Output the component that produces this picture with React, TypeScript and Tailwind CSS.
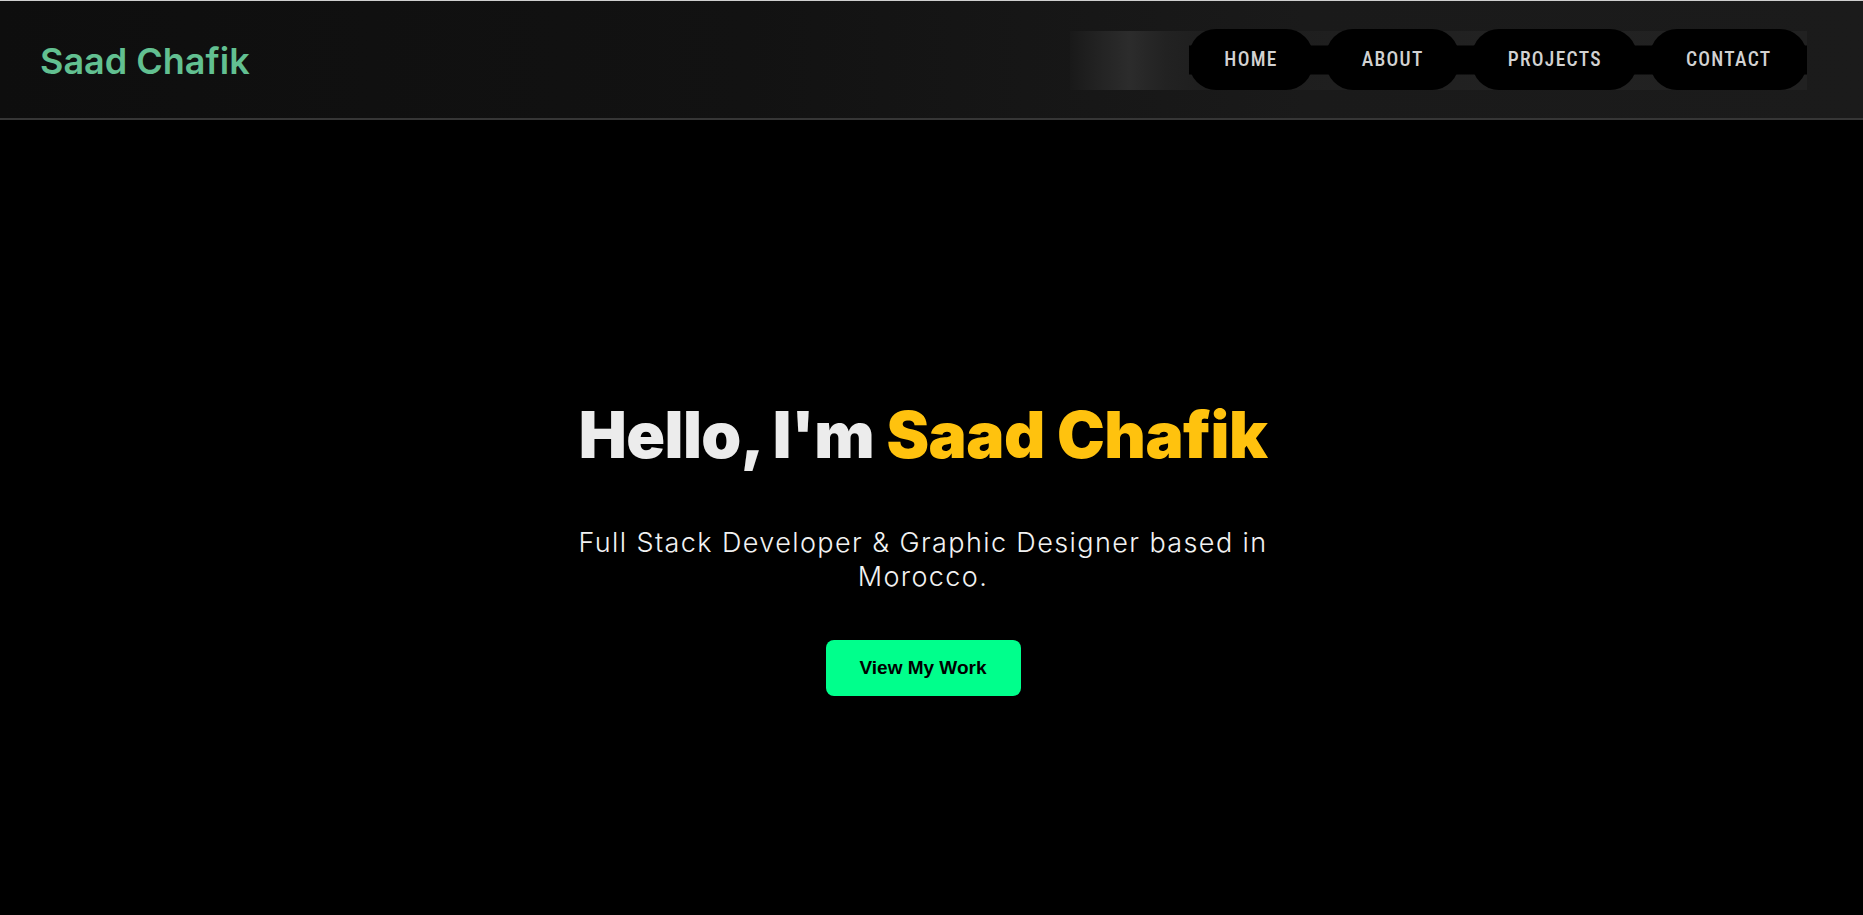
import React from "react";

const navItems = ["HOME", "ABOUT", "PROJECTS", "CONTACT"];

export default function App() {
  return (
    <div className="min-h-screen w-full bg-black">
      <header className="relative flex h-[120px] items-center justify-between border-t border-b-2 border-t-[#cfcfcf] border-b-[#363636] bg-[linear-gradient(90deg,#0e0e0e_0%,#121212_40%,#1a1a1a_70%,#1b1b1b_100%)] pl-[40px] pr-[56px]">
        <div className="pt-[3px] font-['Inter',sans-serif] text-[36px] font-semibold tracking-[0px] text-[#62c091]">
          Saad Chafik
        </div>
        <div className="absolute left-[1070px] top-[30px] h-[59px] w-[737px] bg-[linear-gradient(90deg,#191919_0%,#232323_4%,#2c2c2c_8%,#222222_13%,#1d1d1d_20%,#222222_60%,#212121_100%)]" />
        <nav className="relative flex items-center gap-[13px]">
          <div className="absolute left-0 right-0 top-1/2 h-[29px] -translate-y-1/2 bg-black" />
          {navItems.map((item) => (
            <a
              key={item}
              className="relative flex h-[61px] items-center rounded-[27px] bg-black px-[35.5px] font-['Liberation_Sans_Narrow','Roboto_Condensed','DejaVu_Sans_Condensed',Roboto,sans-serif] text-[19.5px] font-medium tracking-[1.3px] text-[#d2d2d2]"
            >
              {item}
            </a>
          ))}
        </nav>
      </header>
      <main className="flex flex-col items-center pr-[17px] pt-[280px]">
        <h1 className="font-['Inter',sans-serif] text-[64px] font-black leading-[70px] tracking-[-0.5px] text-[#ececec]">
          Hello, I'm <span className="text-[#ffc20e]">Saad Chafik</span>
        </h1>
        <p className="mt-[56px] max-w-[760px] text-center font-['Inter',sans-serif] text-[27px] font-light leading-[34px] tracking-[1.4px] text-[#f2f2f2]">
          Full Stack Developer &amp; Graphic Designer based in
          <br />
          Morocco.
        </p>
        <button className="mt-[46px] flex h-[56px] w-[195px] items-center justify-center rounded-[8px] bg-[#00ff8c] font-['Liberation_Sans',Arial,sans-serif] text-[19px] font-bold text-black">
          View My Work
        </button>
      </main>
    </div>
  );
}
